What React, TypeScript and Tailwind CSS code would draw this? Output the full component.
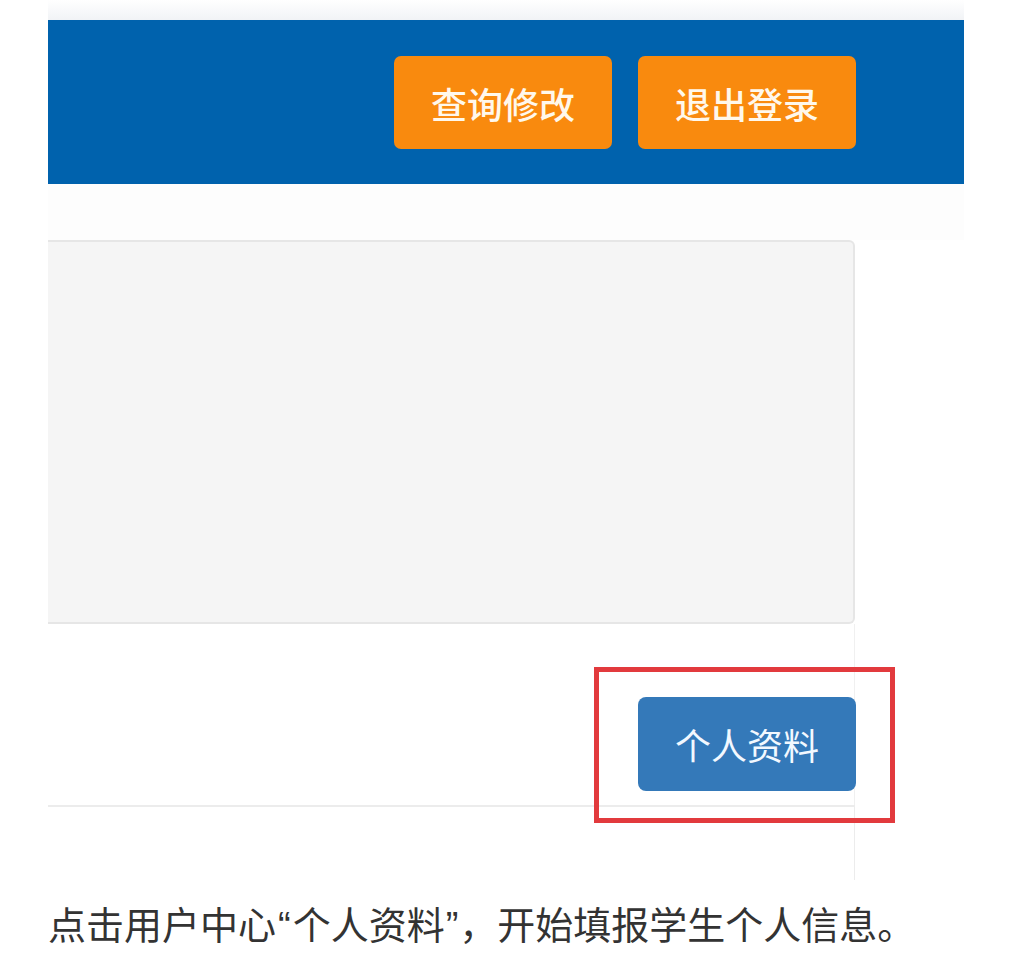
import React from "react";

export default function App() {
  const cjk = { fontFamily: '"Noto Sans CJK SC", "Noto Sans", sans-serif' };
  const q = { fontFamily: '"Liberation Sans", Arial, sans-serif' };
  return (
    <div className="w-[1028px] h-[973px] overflow-hidden bg-white pl-[48px]" style={cjk}>
      <div className="h-[20px] w-[916px] bg-gradient-to-b from-white to-[#f1f3f6]" />
      <header className="flex h-[164px] w-[916px] items-start justify-end gap-[26px] bg-[#0062ad] pr-[108px] pt-[36px]">
        <button className="h-[93px] w-[218px] rounded-[7px] bg-[#f98a0e] text-[36px] font-medium leading-none text-[#fff8ec]">
          查询修改
        </button>
        <button className="h-[93px] w-[218px] rounded-[7px] bg-[#f98a0e] text-[36px] font-medium leading-none text-[#fff8ec]">
          退出登录
        </button>
      </header>
      <div className="h-[56px] w-[916px] bg-[#fdfdfd]" />
      <div className="h-[384px] w-[807px] rounded-r-[6px] border-y-2 border-r-2 border-[#e6e6e6] bg-[#f5f5f5]" />
      <div className="h-[181px] w-[807px] border-r border-[#f0f0f0] pt-[73px]">
        <div className="relative ml-[590px] w-[218px]">
          <button className="h-[94px] w-[218px] rounded-[8px] bg-[#3479b9] text-[36px] leading-none text-[#f2f8ff]">
            个人资料
          </button>
          <div className="pointer-events-none absolute left-[-44px] top-[-30px] h-[156px] w-[301px] border-[5px] border-[#e23a3d]" />
        </div>
      </div>
      <div className="h-[75px] w-[807px] border-r border-t-2 border-[#ececec]" />
      <p className="mt-[21px] text-[38px] leading-[44px] whitespace-nowrap text-[#333333]">
        点击用户中心<span style={q} className="px-[2px]">“</span>个人资料<span style={q} className="px-[1px]">”</span>，开始填报学生个人信息。
      </p>
    </div>
  );
}
